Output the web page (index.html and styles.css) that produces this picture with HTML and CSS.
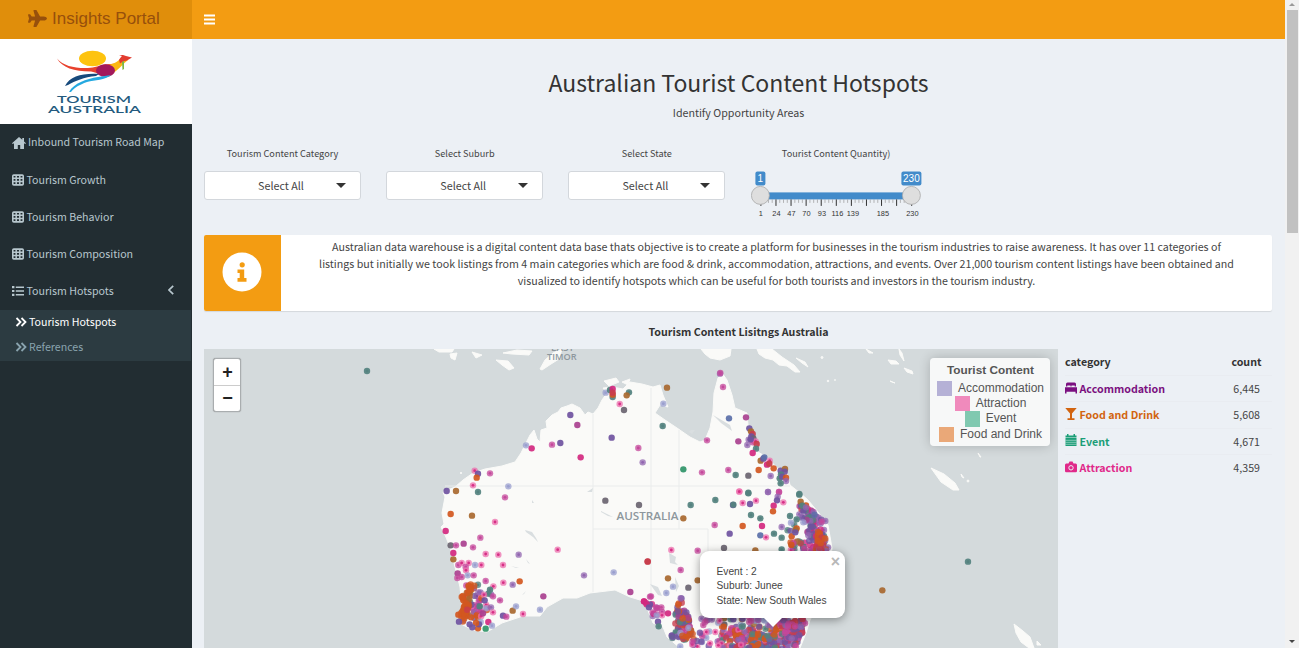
FILE: index.html
```html
<!DOCTYPE html>
<html lang="en">
<head>
<meta charset="utf-8">
<title>Insights Portal</title>
<link rel="stylesheet" href="styles.css">
</head>
<body>
<svg class="defs" width="0" height="0">
  <symbol id="grid" viewBox="0 0 12 12"><rect x=".8" y="1.100" width="10.400" height="9.800" rx="1" fill="none" stroke="currentColor" stroke-width="1.600"/><path d="M.7 4.300h10.600M.7 7.600h10.600M4.200 1v10M7.800 1v10" stroke="currentColor" stroke-width="1.500"/></symbol>
  <symbol id="chevrons" viewBox="0 0 12 10"><path d="M1.500 1l4 4-4 4M6.500 1l4 4-4 4" fill="none" stroke="currentColor" stroke-width="1.800"/></symbol>
</svg>
<div class="app">
  <aside class="sidebar">
    <div class="brand">
      <svg class="plane" viewBox="0 0 576 512"><path fill="currentColor" d="M480 192H365.700L260 8c-3-5-8-8-14-8h-65c-11 0-18 10-15 20l49 172H112l-43-58c-3-4-8-6-13-6H16c-10 0-18 10-15 20L32 256 1 364c-3 10 5 20 15 20h40c5 0 10-2 13-6l43-58h103l-49 172c-3 10 4 20 15 20h65c6 0 11-3 14-8l106-184H480c35 0 96-29 96-64s-61-64-96-64z"/></svg>
      <span>Insights Portal</span>
    </div>
    <div class="logo">
      <svg width="96" height="70" viewBox="46 48 96 70">
        <ellipse cx="92.500" cy="58.500" rx="13.500" ry="7.800" fill="#fdc30f"/>
        <path d="M57 58.500c6 7 16 9.500 28 9.500 8 0 12-1.500 19-3.500l13-1-12 12c-6-1-8-3-14-4-17 0-29-4-34-13z" fill="#e8412d"/>
        <path d="M104 65c7 0 12-2 16-6l4-3 4 4c-5 4-10 10-17 15l-6 3z" fill="#fcb813"/>
        <path d="M119 60c1-2 2-3 3-4l-3-1 4 0 3 1 6 1.500-5 3-4 1-3 2z" fill="#e23c30"/>
        <path d="M122 62l2-1 0 8-1.500 1z" fill="#7ab648"/>
        <ellipse cx="105.500" cy="70.500" rx="9.500" ry="6.300" fill="#a3195b"/>
        <path d="M65 86c5-10 18-13 34-12l-3 2c-12 1-21 5-28 9z" fill="#174a7c"/>
        <path d="M69 92c5-9 17-13 29-15l13-2c-6 5-16 5-24 7-8 3-12 5-16 10z" fill="#25a9e0"/>
        <text x="57" y="103.200" textLength="74" lengthAdjust="spacingAndGlyphs" class="logo-text">TOURISM</text>
        <text x="48" y="113.300" textLength="93" lengthAdjust="spacingAndGlyphs" class="logo-text">AUSTRALIA</text>
      </svg>
    </div>
    <nav class="menu">
      <a class="item"><svg class="home" viewBox="0 0 14 12"><path fill="currentColor" d="M7 0L0 6.200l.8.900L2 6.200V12h3.800V8h2.400v4H12V6.200l1.200.9.800-.9-2-1.800V1h-1.700v1.800z"/></svg><span>Inbound Tourism Road Map</span></a>
      <a class="item"><svg class="ico"><use href="#grid"/></svg><span>Tourism Growth</span></a>
      <a class="item"><svg class="ico"><use href="#grid"/></svg><span>Tourism Behavior</span></a>
      <a class="item"><svg class="ico"><use href="#grid"/></svg><span>Tourism Composition</span></a>
      <a class="item"><svg class="ico" viewBox="0 0 12 12"><path d="M0 2.200h2.400M0 6h2.400M0 9.800h2.400" stroke="currentColor" stroke-width="2.200"/><path d="M3.800 2.200H12M3.800 6H12M3.800 9.800H12" stroke="currentColor" stroke-width="1.500"/></svg><span>Tourism Hotspots</span>
        <svg class="angle" viewBox="0 0 6 10"><path d="M5.200.8L1 5l4.200 4.200" fill="none" stroke="currentColor" stroke-width="1.700"/></svg></a>
      <div class="submenu">
        <a class="sub on"><svg class="chev"><use href="#chevrons"/></svg><span>Tourism Hotspots</span></a>
        <a class="sub"><svg class="chev"><use href="#chevrons"/></svg><span>References</span></a>
      </div>
    </nav>
  </aside>
  <div class="main">
    <header class="topbar"><svg width="11" height="11" viewBox="0 0 11 11"><path d="M0 1.500h11M0 5.500h11M0 9.500h11" stroke="#fff" stroke-width="2"/></svg></header>
    <main class="content">
      <h1>Australian Tourist Content Hotspots</h1>
      <p class="lead">Identify Opportunity Areas</p>
      <div class="filters">
        <div class="filter"><label>Tourism Content Category</label><div class="select"><span>Select All</span><i></i></div></div>
        <div class="filter"><label>Select Suburb</label><div class="select"><span>Select All</span><i></i></div></div>
        <div class="filter"><label>Select State</label><div class="select"><span>Select All</span><i></i></div></div>
        <div class="filter"><label>Tourist Content Quantity)</label>
          <svg class="slider" id="slider" width="171" height="50" viewBox="750.6 170.600 171 50"></svg>
        </div>
      </div>
      <section class="infobox">
        <div class="infoicon"><svg width="40" height="40" viewBox="0 0 40 40"><circle cx="20" cy="20" r="19.500" fill="#fff"/><circle cx="20.200" cy="12.800" r="2.600" fill="#f39c12"/><path d="M15.500 17.500h6.700v8.600h2.300v3.600h-9v-3.600h2.200v-5h-2.200z" fill="#f39c12"/></svg></div>
        <p>Australian data warehouse is a digital content data base thats objective is to create a platform for businesses in the tourism industries to raise awareness. It has over 11 categories of<br>listings but initially we took listings from 4 main categories which are food &amp; drink, accommodation, attractions, and events. Over 21,000 tourism content listings have been obtained and<br>visualized to identify hotspots which can be useful for both tourists and investors in the tourism industry.</p>
      </section>
      <h2>Tourism Content Lisitngs Australia</h2>
      <div class="panel">
        <div class="map">
          <svg id="map" width="854" height="299" viewBox="204 349 854 299">
            <g class="land">
              <path d="M445 497L443 492 455 487 463 480 473 473 485 469 502 466 515 462 521 453 525 445 530 435 534 430 537 439 540 442 541 430 547 428 546 421 552 415 558 412 561 408 567 406 572 404 580 408 585 415 588 412 593 414 598 408 602 400 607 393 603 388 612 387 623 389 630 382 642 384 653 387 660 385 663 395 668 407 660 405 655 413 665 420 677 428 690 437 700 442 705 440 710 428 713 412 714 393 718 378 722 373 727 380 732 395 735 408 740 410 747 413 748 425 755 438 758 452 768 458 777 468 787 473 790 485 800 493 808 500 818 512 828 525 832 548 828 580 818 605 810 620 806 633 800 648H680L667 637 663 627 653 623 647 608 640 600 630 597 615 590 590 593 577 598 563 598 547 607 540 616 523 616 502 623 487 632 473 630 457 622 462 607 460 587 455 567 450 547 445 535 441 527 444 524 442 513z"/>
              <path d="M604 381l12-3 3 4-10 4zM622 382l8-3-2 6zM496 360l12 1 6 7-5 2-7-5zM540 369l5-9 8-7 9-4-3 10-8 5-9 6zM434 349l20 0-2 3-13 0zM450 354l7-1-2 7-4-2zM472 352l10 3-6 3zM503 353l14-3 15 1-3 4-17-1zM701 349h30l-1 7-10 4-10-2-5-4zM757 349h15l10 8 12 8 6 7-5 0-8-6-8-1-6-5-8-2-6-4zM796 358l9 4 3 5-6-4zM888 360l8 1 3 3-8 0zM899 349l3 4 2 8-4-6zM904 368l8 3 1 3-6-2zM866 349l7 4-4 0zM890 381l5 2-3-1zM931 468l13 6 11 9 4 7-6 0-12-8zM961 474l3 4-2-1zM978 453l3 4-1 0zM1014 624l9 7 7 6 4 11h-5l-8-6-5-9zM1037 641l4 4h-4z"/>
              <circle cx="822" cy="357.500" r="1"/><circle cx="828" cy="381" r=".8"/><circle cx="835" cy="380" r=".5"/><circle cx="968" cy="481" r="1"/><circle cx="461" cy="473" r=".7"/>
            </g>
            <path class="borders" d="M593 414V592M679 430V529M593 529H708M708 529V551M445 486H790M651 388V610"/>
            <path class="lakes" d="M587 492l6-4-1 4zM532 500l2 3-2 0zM525 530l7 2 4 6 2 4-5-5-7-5zM601 511l6 3 6 3-5-1-7-4zM526 559l4 5-2-1zM511 566l8 2-3 0zM669 553l7 4-1 5 3 3-8-2zM650 584l8 3 4 9-4-1zM675 577l4 9-3 6zM691 430l4 0-3 4-3-2zM713 415l8 8 11 8-2-6zM522 595l4-4-2 3z"/>
            <text class="label" x="616.500" y="520.300" textLength="62" lengthAdjust="spacingAndGlyphs">AUSTRALIA</text>
            <text class="label timor" x="547" y="359.800" textLength="29.500" lengthAdjust="spacingAndGlyphs">TIMOR</text>
            <text class="label timor" x="551" y="351.300" textLength="23" lengthAdjust="spacingAndGlyphs">EAST</text>
            <g id="pins"></g>
          </svg>
          <div class="zoomctl"><b>+</b><b>−</b></div>
          <div class="legend">
            <strong>Tourist Content</strong>
            <div><i class="acc"></i>Accommodation</div>
            <div><i class="att"></i>Attraction</div>
            <div><i class="evt"></i>Event</div>
            <div><i class="fnd"></i>Food and Drink</div>
          </div>
          <div class="popup"><em>×</em>Event : 2<br>Suburb: Junee<br>State: New South Wales</div>
        </div>
        <div class="table">
          <div class="row head"><span>category</span><span>count</span></div>
          <div class="row c-acc"><svg viewBox="0 0 12 12"><path fill="currentColor" d="M2.500.5h7Q11 .5 11 2v2.600H9.700V3.500H6.500v1.100h-1V3.500H2.300v1.100H1V2Q1 .5 2.500.5zM0 5.200h12v6.300h-1.500V9.800h-9v1.700H0z"/></svg><b>Accommodation</b><span>6,445</span></div>
          <div class="row c-fnd"><svg viewBox="0 0 12 12"><path fill="currentColor" d="M.3 0h11.400L7 5.500v4.800h2.500V12h-7v-1.700H5V5.500z"/></svg><b>Food and Drink</b><span>5,608</span></div>
          <div class="row c-evt"><svg viewBox="0 0 12 12"><path fill="currentColor" d="M.5 1.500H2V0h1.500v1.500h5V0H10v1.500h1.500v2H.5zM.5 4h11v8H.5z"/><path d="M.5 6.300h11M.5 8.300h11M.5 10.300h11" stroke="#ecf0f5" stroke-width=".5"/></svg><b>Event</b><span>4,671</span></div>
          <div class="row c-att"><svg viewBox="0 0 12 12"><path fill="currentColor" d="M1.300 2.500H3.500L4.500.5h3l1 2h2.200Q12 2.500 12 4v6q0 1.300-1.300 1.300H1.300Q0 11.300 0 10V4q0-1.500 1.300-1.500z"/><circle cx="6" cy="6.800" r="2.200" fill="none" stroke="#ecf0f5" stroke-width="1"/></svg><b>Attraction</b><span>4,359</span></div>
        </div>
      </div>
    </main>
  </div>
  <div class="scroll"><i class="up"></i><i class="thumb"></i><i class="down"></i></div>
</div>
<script src="map.js"></script>
</body>
</html>
```
FILE: styles.css
```css
* { box-sizing: border-box; }
body { margin: 0; height: 648px; overflow: hidden; background: #ecf0f5; color: #444; font: 10.68px/17.14px "Noto Sans CJK SC", "Noto Sans", sans-serif; }
.defs { position: absolute; }
.app { display: flex; height: 648px; }
h1, h2, p { margin: 0; font-weight: 400; }

.sidebar { width: 192px; flex: none; background: #222d32; color: #b8c7ce; }
.brand { height: 39px; background: #e08e0b; color: #97500c; display: flex; align-items: center; padding: 0 0 2px 28px; gap: 5px; font: 17px "Liberation Sans", sans-serif; }
.plane { width: 19px; height: 17px; margin-bottom: 1px; }
.brand span { white-space: nowrap; }
.logo { height: 85px; background: #fff; padding: 9px 0 0 46px; }
.logo svg { display: block; }
.logo-text { font: 600 8.8px Lato, sans-serif; fill: #235a7e; }
.item { display: flex; align-items: center; height: 37.2px; padding-left: 12px; gap: 2.4px; font-size: 10.65px; }
.item span, .sub span { padding-bottom: 1.2px; }
.item:first-child { gap: 2px; }
.ico { width: 12px; height: 12px; }
.home { width: 14px; height: 12px; }
.angle { width: 6px; height: 10px; margin: 0 18px 2px auto; }
.submenu { background: #2c3b41; height: 51px; width: 191px; color: #8aa4af; }
.sub { display: flex; align-items: center; height: 25px; gap: 2px; padding-left: 15px; font-size: 10.65px; }
.chev { width: 12px; height: 10px; }
.on { color: #fff; }

.main { flex: 1; min-width: 0; }
.topbar { height: 39px; background: #f39c12; padding: 12px 0 0 12px; }
.content { padding: 25px 12px 0; height: 609px; }
h1 { font-size: 23px; line-height: 36px; text-align: center; color: #333; }
.lead { text-align: center; line-height: 24px; padding-top: 1px; }
.filters { display: grid; grid-template-columns: 157px 157px 157px 171px; column-gap: 25.2px; height: 91px; margin-top: 19px; }
.filter label { display: block; text-align: center; font-size: 9.17px; line-height: 18px; height: 27px; }
.select { height: 29px; border: 1px solid #d3d7dc; border-radius: 3px; background: #fff; display: flex; align-items: center; justify-content: center; position: relative; font-size: 10.75px; padding-right: 3px; }
.select i { position: absolute; right: 14px; top: 11px; border: 5px solid transparent; border-top-color: #333; border-bottom: 0; }
.slider { display: block; }
.sl-num { font: 7.4px "Liberation Sans", sans-serif; fill: #333; text-anchor: middle; }
.sl-tag { font: 10px "Liberation Sans", sans-serif; fill: #fff; text-anchor: middle; }

.infobox { display: flex; height: 76px; background: #fff; border-radius: 2px; box-shadow: 0 1px 1px rgba(0,0,0,.1); width: 1068px; }
.infoicon { width: 77px; background: #f39c12; border-radius: 2px 0 0 2px; display: grid; place-items: center; padding: 0 1px 2px 0; }
.infobox p { flex: 1; text-align: center; white-space: nowrap; padding-top: 3px; }
h2 { text-align: center; font-size: 10.68px; font-weight: 700; line-height: 36px; height: 38px; padding-top: 3px; color: #333; }
.panel { display: flex; height: 299px; gap: 7px; }
.map { position: relative; width: 854px; height: 299px; overflow: hidden; background: #d4dadc; }
.map > svg { display: block; }
.land { fill: #fafaf8; stroke: #fafaf8; stroke-width: 1; stroke-linejoin: round; }
.borders { fill: none; stroke: #eaecec; stroke-width: 1; }
.lakes { fill: #d9dee0; }
.label { font: 600 10px "Open Sans", sans-serif; fill: #8d979d; }
.timor { font-size: 9.5px; }
.zoomctl { position: absolute; left: 9px; top: 9px; width: 28px; height: 54px; background: #fff; border: 1px solid #a9adaf; border-radius: 3px; box-shadow: 0 0 1px #777; }
.zoomctl b { display: block; height: 26px; padding-left: 1px; text-align: center; font: 700 18px/26px "Liberation Sans", sans-serif; color: #222; }
.zoomctl b + b { border-top: 1px solid #ccc; line-height: 24px; }
.legend { position: absolute; left: 726px; top: 9px; width: 120px; height: 88px; padding: 4px 0 0 1px; border-radius: 4px; background: rgba(255,255,255,.8); box-shadow: 0 0 12px rgba(0,0,0,.2); text-align: center; color: #555; font: 12px/15.2px "Liberation Sans", sans-serif; }
.legend strong { display: block; font-size: 11.8px; line-height: 17px; margin-bottom: 2px; }
.legend div { display: flex; justify-content: center; gap: 6px; }
.legend i { width: 15px; height: 15.2px; }
.acc { background: #b5b1d6; }
.att { background: #f08abc; }
.evt { background: #80c9b0; }
.fnd { background: #eaa878; }
.popup { position: absolute; left: 496px; top: 202px; width: 145px; height: 67px; border-radius: 9px; background: #fff; box-shadow: 0 2px 10px rgba(0,0,0,.4); padding: 14px 0 0 16.5px; font: 10.2px/14.4px "Liberation Sans", sans-serif; white-space: nowrap; }
.popup::after { content: ""; position: absolute; left: 64px; top: 67px; border: 9px solid transparent; border-top-color: #fff; border-bottom: 0; }
.popup em { position: absolute; right: 5px; top: 3px; font: 700 16px/16px "Liberation Sans", sans-serif; color: #b8b8b8; }

.table { width: 207px; }
.row { display: flex; align-items: center; height: 26.3px; padding-right: 12px; border-top: 1px solid #e9ecf1; }
.row svg { width: 12px; height: 12px; margin: 0 2.5px 2px 0; }
.row span:last-child { margin-left: auto; color: #444; }
.head { border: 0; font-weight: 700; padding-right: 10.5px; height: 26px; }
.row.head span:last-child { color: #333; }
.head, .row b { color: #333; }
.row.c-acc b, .c-acc svg { color: #7b1080; }
.row.c-fnd b, .c-fnd svg { color: #d2640f; }
.row.c-evt b, .c-evt svg { color: #1b9e77; }
.row.c-att b, .c-att svg { color: #e0298a; }

.scroll { width: 14px; flex: none; background: #f1f1f1; display: flex; flex-direction: column; align-items: center; }
.thumb { width: 11px; height: 223px; background: #c1c1c1; margin: 4px 0 auto; }
.up { border: 3px solid transparent; border-bottom-color: #999; border-top: 0; margin-top: 3px; }
.down { border: 3px solid transparent; border-top-color: #444; border-bottom: 0; margin-bottom: 5px; }
```
FILE: map.js
```js
const COLORS = { P: '#6f539f', p: '#9165b0', M: '#a9408f', m: '#c4479b', K: '#d3287f', k: '#ec6fae', t: '#54827f', T: '#6a6470', l: '#9a9fcf', o: '#d2571f', b: '#a8682f', g: '#2f9468', B: '#5a6fa8', r: '#c83d4c' };

// Each tile: origin in map pixels, then pins as "code x y" in thirds of a pixel.
const TILES = [
  [430, 345, 'P421 210 M442 240 P545 278 m625 309 p638 352 l288 301 K305 310 m366 299 P391 294 K452 337 k134 377 P144 386 o140 398 m180 385 k129 421 l235 424 P50 438 b78 438 t144 441 l527 143 t540 135 K548 132 t548 156 o548 149 r548 143 t597 142 b590 151 k569 177 T582 195'],
  [640, 345, 'p240 86 m241 84 m249 126 b81 128 l70 176 t68 243 B267 220 M318 217 m201 286 M295 289 g130 373 m186 382 m265 375 t287 390 T325 392 o356 375 p392 393 k298 439 t325 443 p384 441 m417 441 t478 447 P328 250 b333 259 r338 267 P334 274 p326 284 T340 280 m338 292 k347 289 r350 297 t348 311 p322 300 K338 324 P332 283 b362 347 P370 341 B373 337 k389 347 K381 359 r388 356 o401 370 P422 377 b435 372 P434 380 t423 388 t419 400 P427 395 o438 398 p438 408 t422 415'],
  [430, 490, 'm225 22 o62 72 b126 77 k195 96 K47 123 m151 143 T62 166 m78 166 M101 161 m129 172 K70 189 k167 192 k205 194 p266 194 b70 208 m85 225 k95 219 k116 219 l135 225 k154 225 k219 225 k383 179 p462 256 l551 247 M601 306 M340 319 l330 359 k279 372 b248 362 l258 349 o269 274 p248 284 k220 278 m210 331 m167 273 k190 289 t180 299 t175 311 k162 314 m189 319 P164 331 t149 349 k172 354 l168 355 p183 352 k189 367 M159 370 K175 396 P219 377 m229 380 l186 407 o144 415 g167 416 l152 396 o123 382 m107 231 k108 241 M83 250 m95 261 m82 264 l113 256 m131 256 r653 215 K642 334 m660 320 T526 32 T627 45 P147 403 o138 399 P119 403 P127 412 o85 374 P87 395'],
  [640, 490, 'k298 5 t325 10 p384 6 m417 6 t226 30 t152 45 P279 45 t280 44 k308 39 P330 42 k348 32 p413 20 P411 31 K401 47 k430 37 o399 64 t333 75 t361 85 m224 105 o308 108 K366 108 P269 131 B361 136 k378 142 t402 131 p425 111 t425 143 t450 78 l453 98 p478 73 t470 88 t425 178 T252 174 b130 85 b346 181 m173 182 k94 180 r23 214 m122 240 b84 265 T145 293 l99 290 l79 309 b173 271 K12 334 m33 319 P30 343 m48 352 m64 352 m38 367 K84 370 k66 376 l50 376 P54 395 t56 409 K20 343 P27 352 t478 14 b482 35 o470 115 o455 139 b467 120 P466 127 m460 160 o454 164 l490 97 P490 62 o498 46 t487 47 p498 52 k199 426 k226 426 T253 404 P308 386 P280 388 k239 392 o251 410 k235 466 k210 460 m190 405 p556 93 m545 95'],
  [204, 340, 't489 93'],
  [860, 345, 't324 650 b67 736']
];

// Dense coastal areas: polygon, pin count, palette.
const CLUSTERS = [
  [[[464,583],[478,584],[484,598],[478,612],[470,628],[461,622],[468,606]], 30, 'opPmtkM'],
  [[[463,586],[472,585],[470,600],[468,612],[463,622],[459,614],[464,606],[461,596]], 50, 'ooorob'],
  [[[474,590],[496,586],[494,610],[476,624]], 12, 'pmklo'],
  [[[806,508],[812,510],[823,521],[825,535],[829,551],[801,551],[806,535],[808,526]], 85, 'PPppMmtKP'],
  [[[818,530],[824,532],[828,551],[815,551]], 38, 'orrorp'],
  [[[790,542],[803,540],[806,551],[790,551]], 12, 'omrtk'],
  [[[798,500],[806,507],[820,515],[812,528],[802,520]], 16, 'PpMrtB'],
  [[[681,595],[685,602],[689,618],[693,636],[684,641],[669,638],[675,625],[676,610]], 80, 'oorPPptM'],
  [[[688,625],[712,632],[712,646],[676,648],[670,638]], 24, 'oPmkl'],
  [[[640,595],[662,608],[665,618],[650,616]], 8, 'mKkp'],
  [[[716,626],[735,624],[745,632],[745,648],[718,648]], 45, 'omrpkPt'],
  [[[735,630],[780,620],[804,618],[802,635],[795,650],[735,650]], 210, 'ooPpmprtMrkP'],
  [[[752,634],[775,634],[778,650],[748,650]], 45, 'oPtooB'],
  [[[775,618],[806,617],[804,633],[790,642]], 60, 'rPrpmmP'],
  [[[695,617],[760,617],[770,622],[745,628],[705,622]], 24, 'tblmp'],
  [[[786,530],[800,518],[802,540],[790,546]], 5, 'tobP']
];

const NS = 'http://www.w3.org/2000/svg';
function add(parent, tag, attrs, text) {
  const el = document.createElementNS(NS, tag);
  for (const k in attrs) el.setAttribute(k, attrs[k]);
  if (text) el.textContent = text;
  parent.appendChild(el);
}

const pins = document.getElementById('pins');
function pin(code, x, y, opacity = 0.92) {
  const soft = 'klmp'.includes(code);
  add(pins, 'circle', { cx: x, cy: y, r: 3.2, fill: COLORS[code], 'fill-opacity': soft ? 0.75 : opacity });
  if (soft || code === 't') add(pins, 'circle', { cx: x, cy: y, r: 1.4, fill: code === 'k' ? '#d62f86' : COLORS[code] });
}

let seed = 17;
const rnd = () => (seed = (seed * 16807) % 2147483647) / 2147483647;
function inside(poly, x, y) {
  let hit = false;
  for (let i = 0, j = poly.length - 1; i < poly.length; j = i++) {
    const [xi, yi] = poly[i], [xj, yj] = poly[j];
    if ((yi > y) !== (yj > y) && x < (xj - xi) * (y - yi) / (yj - yi) + xi) hit = !hit;
  }
  return hit;
}
for (const [poly, count, palette] of CLUSTERS) {
  const xs = poly.map(p => p[0]), ys = poly.map(p => p[1]);
  const x0 = Math.min(...xs), x1 = Math.max(...xs), y0 = Math.min(...ys), y1 = Math.max(...ys);
  for (let n = 0; n < count;) {
    const x = x0 + rnd() * (x1 - x0), y = y0 + rnd() * (y1 - y0);
    if (inside(poly, x, y)) { pin(palette[Math.floor(rnd() * palette.length)], x, y, 0.8); n++; }
  }
}
for (const [ox, oy, list] of TILES)
  for (const m of list.matchAll(/([A-Za-z])(\d+) (\d+)/g)) pin(m[1], ox + m[2] / 3, oy + m[3] / 3);

const slider = document.getElementById('slider');
add(slider, 'rect', { x: 760, y: 192, width: 151, height: 7, fill: '#428bca' });
for (let i = 0; i <= 40; i++) {
  const x = 760.5 + i * 3.77, big = i % 4 === 0;
  add(slider, 'path', { d: `M${x} 199v${big ? 6.5 : 3.5}`, stroke: big ? '#333' : '#999', 'stroke-width': big ? 1 : 0.7 });
}
[[1, 760.5], [24, 776], [47, 791], [70, 806], [93, 821.5], [116, 837], [139, 852.5], [185, 882.5], [230, 912]]
  .forEach(([t, x]) => add(slider, 'text', { x, y: 216, class: 'sl-num' }, String(t)));
for (const [t, x, w] of [['1', 760, 10], ['230', 911, 20]]) {
  add(slider, 'circle', { cx: x, cy: 195, r: 9, fill: '#dedede', stroke: '#aaa', 'stroke-width': 0.8 });
  add(slider, 'rect', { x: x - w / 2, y: 171, width: w, height: 14, rx: 2, fill: '#428bca' });
  add(slider, 'text', { x, y: 181.5, class: 'sl-tag' }, t);
}
```
